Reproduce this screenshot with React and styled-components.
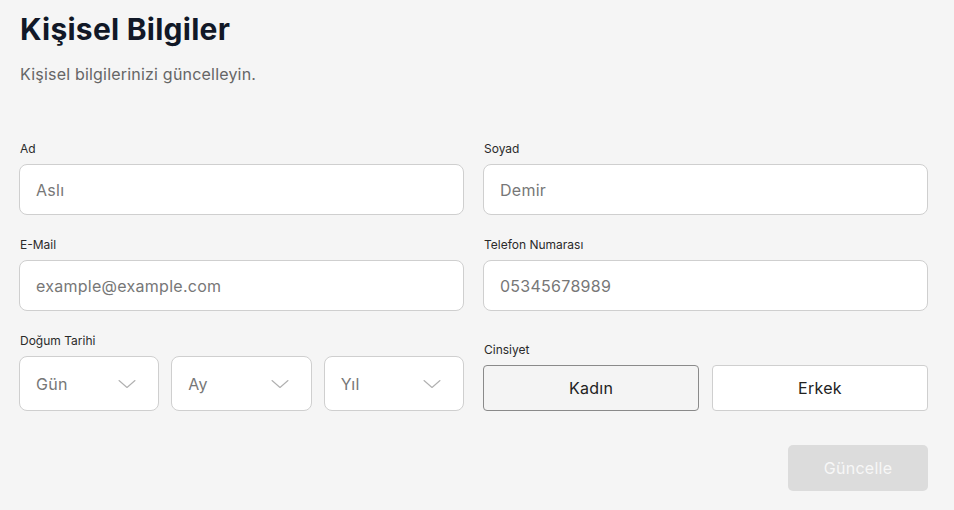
import React from "react";
import styled, { createGlobalStyle } from "styled-components";

const Global = createGlobalStyle`
  * { box-sizing: border-box; }
  html, body { margin: 0; padding: 0; background: #f5f5f5; }
  body { font-family: Inter, "Noto Sans", "Liberation Sans", sans-serif; }
`;

const Page = styled.div`
  width: 947px;
  padding: 11px 19px 19px 19px;
  display: flex;
  flex-direction: column;
`;

const Title = styled.h1`
  margin: 0 0 0 1px;
  font-size: 30px;
  line-height: 36px;
  font-weight: 700;
  color: #111827;
  letter-spacing: 0.25px;
`;

const Subtitle = styled.p`
  margin: 15px 0 0 1px;
  font-size: 16px;
  line-height: 24px;
  color: #666666;
  letter-spacing: 0.2px;
`;

const Form = styled.div`
  margin-top: 55px;
  display: grid;
  grid-template-columns: 1fr 1fr;
  column-gap: 19px;
  row-gap: 22px;
  align-items: end;
`;

const Field = styled.div`
  display: flex;
  flex-direction: column;
  gap: 7px;
`;

const Label = styled.label`
  font-size: 12px;
  line-height: 16px;
  color: #2a2a2a;
  padding-left: 1px;
`;

const Input = styled.div`
  height: 51px;
  background: #ffffff;
  border: 1px solid #cfcfcf;
  border-radius: 8px;
  display: flex;
  align-items: center;
  padding: 0 16px;
  font-size: 16px;
  letter-spacing: 0.27px;
  color: #777777;
`;

const SelectRow = styled.div`
  display: grid;
  grid-template-columns: repeat(3, 1fr);
  gap: 12px;
`;

const Select = styled.div`
  height: 55px;
  background: #ffffff;
  border: 1px solid #cfcfcf;
  border-radius: 8px;
  display: flex;
  align-items: center;
  justify-content: space-between;
  padding: 0 22px 0 16px;
  font-size: 16px;
  letter-spacing: 0.27px;
  color: #777777;
`;

const ToggleRow = styled.div`
  display: grid;
  grid-template-columns: 1fr 1fr;
  gap: 13px;
`;

const Toggle = styled.button`
  height: 46px;
  margin: 0;
  border-radius: 4px;
  border: 1px solid ${(p) => (p.$active ? "#8a8a8a" : "#cfcfcf")};
  background: ${(p) => (p.$active ? "#f4f4f4" : "#ffffff")};
  font-family: inherit;
  font-size: 16px;
  letter-spacing: 0.27px;
  color: #222222;
  cursor: pointer;
`;

const Footer = styled.div`
  margin-top: 34px;
  display: flex;
  justify-content: flex-end;
`;

const Submit = styled.button`
  width: 140px;
  height: 46px;
  border: none;
  border-radius: 5px;
  background: #dcdcdc;
  color: #f7f7f7;
  font-family: inherit;
  font-size: 16px;
  letter-spacing: 0.27px;
`;

const Chevron = () => (
  <svg width="18" height="10" viewBox="0 0 18 10" fill="none">
    <path d="M1 1.5 L9 8.5 L17 1.5" stroke="#b0b0b0" strokeWidth="1.1" strokeLinecap="round" strokeLinejoin="round" />
  </svg>
);

export default function App() {
  return (
    <>
      <Global />
      <Page>
        <Title>Kişisel Bilgiler</Title>
        <Subtitle>Kişisel bilgilerinizi güncelleyin.</Subtitle>
        <Form>
          <Field>
            <Label>Ad</Label>
            <Input>Aslı</Input>
          </Field>
          <Field>
            <Label>Soyad</Label>
            <Input>Demir</Input>
          </Field>
          <Field>
            <Label>E-Mail</Label>
            <Input>example@example.com</Input>
          </Field>
          <Field>
            <Label>Telefon Numarası</Label>
            <Input>05345678989</Input>
          </Field>
          <Field>
            <Label>Doğum Tarihi</Label>
            <SelectRow>
              <Select>Gün<Chevron /></Select>
              <Select>Ay<Chevron /></Select>
              <Select>Yıl<Chevron /></Select>
            </SelectRow>
          </Field>
          <Field>
            <Label>Cinsiyet</Label>
            <ToggleRow>
              <Toggle $active>Kadın</Toggle>
              <Toggle>Erkek</Toggle>
            </ToggleRow>
          </Field>
        </Form>
        <Footer>
          <Submit>Güncelle</Submit>
        </Footer>
      </Page>
    </>
  );
}
